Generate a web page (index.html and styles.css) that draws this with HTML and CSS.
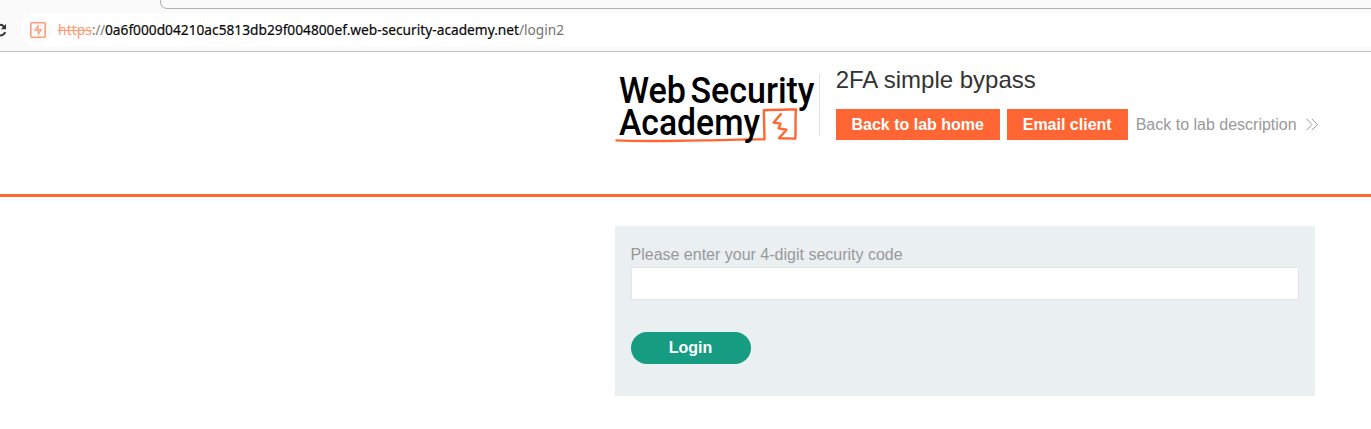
FILE: index.html
```html
<!DOCTYPE html>
<html lang="en">
<head>
<meta charset="utf-8">
<title>2FA simple bypass</title>
<link rel="stylesheet" href="styles.css">
</head>
<body>
<div class="browser">
  <div class="tabs"><div class="tab-edge"></div></div>
  <div class="toolbar">
    <svg class="reload" width="8" height="16" viewBox="0 0 8 16"><path d="M-1 2.9C1.7 2.1 3.3 3.6 4.4 5.6M-1 13.2C2 13.9 4.2 12.6 5.2 10.2" fill="none" stroke="#333" stroke-width="1.9"/><path d="M6 2v5.2H.8z" fill="#333"/></svg>
    <div class="address">
      <span class="site-icon"><svg width="16" height="16" viewBox="0 0 16 16" fill="none" stroke="#ff9c7b"><rect x=".8" y=".8" width="14.4" height="14.4" rx="1" stroke-width="1.6"/><path d="M8.7 3.2L5 8.2H8.4V12.8M8.2 3.8V7.6H11.2L8 12.6" stroke-width="1.2"/></svg></span>
      <svg class="url" width="520" height="24" viewBox="0 0 520 24">
        <text x="0" y="17" textLength="34" lengthAdjust="spacingAndGlyphs" class="scheme">https</text>
        <path d="M0 12.5h34" stroke="#ff9b73"/>
        <text x="34" y="17" textLength="13" lengthAdjust="spacingAndGlyphs" class="muted">://</text>
        <text x="47" y="17" textLength="414" lengthAdjust="spacingAndGlyphs" class="host">0a6f000d04210ac5813db29f004800ef.web-security-academy.net</text>
        <text x="461" y="17" textLength="45" lengthAdjust="spacingAndGlyphs" class="muted">/login2</text>
      </svg>
    </div>
  </div>
</div>
<header class="lab-header">
  <svg class="logo" width="204" height="80" viewBox="0 0 204 80">
    <path d="M1.5 73.4C30 74.8 60 73.6 90 73.4C115 73 130 72.2 149.5 72.4L148.8 43.3C160 42.6 170 42.6 181 42.4C180 52 181 62 180.3 71.6L164 71.3L171.5 62.8L163.7 61.3L165.5 56.6L158.7 55.6L165.7 47.2" fill="none" stroke="#ff6633" stroke-width="2.4" stroke-linecap="round" stroke-linejoin="round"/>
    <text x="4" y="36" textLength="67" lengthAdjust="spacingAndGlyphs">Web</text>
    <text x="75.5" y="36" textLength="124" lengthAdjust="spacingAndGlyphs">Security</text>
    <text x="4" y="68" textLength="141" lengthAdjust="spacingAndGlyphs">Academy</text>
  </svg>
  <div class="title-block">
    <h1>2FA simple bypass</h1>
    <div class="links">
      <a class="button home">Back to lab home</a>
      <a class="button mail">Email client</a>
      <a class="back">Back to lab description
        <svg width="12" height="13" viewBox="0 0 12 13"><path d="M.5 .8L6 6.5L.5 12.2M5.8 .8L11.3 6.5L5.8 12.2" fill="none" stroke="#999"/></svg>
      </a>
    </div>
  </div>
</header>
<main>
  <form class="panel">
    <label for="code">Please enter your 4-digit security code</label>
    <input id="code" type="text">
    <button type="button">Login</button>
  </form>
</main>
</body>
</html>
```
FILE: styles.css
```css
* { box-sizing: border-box; }
body { margin: 0; height: 429px; overflow: hidden; background: #fff; font: 16px/20px "Liberation Sans", Arial, sans-serif; }
.browser { height: 52px; background: #fafafa; border-bottom: 1px solid #c4c4c4; overflow: hidden; }
.tabs { height: 13px; padding-left: 160px; }
.tab-edge { height: 9px; border: solid #b5b5b5; border-width: 0 0 1px 1px; border-bottom-left-radius: 7px; }
.toolbar { display: flex; align-items: center; height: 34px; }
.reload { width: 8px; margin-right: 13px; }
.address { flex: 1; display: flex; align-items: center; height: 34px; background: #fff; border-radius: 17px 0 0 17px; padding-left: 4px; }
.site-icon { display: flex; align-items: center; justify-content: center; width: 26px; height: 26px; margin-right: 7px; border-radius: 50%; background: #fafafa; }
.url { font: 15px "Noto Sans", sans-serif; }
.scheme { fill: #ff9b73; }
.muted { fill: #737373; }
.host { fill: #080808; stroke: #080808; stroke-width: .2px; }
.lab-header { display: flex; height: 145px; padding-left: 614.7px; border-bottom: 3px solid #ff6633; }
.logo { margin-top: 15px; font: 500 37.5px Roboto, sans-serif; fill: #000; overflow: visible; }
.title-block { margin: 22px 0 0 0; height: 62px; padding-left: 16px; border-left: 1px solid #e2e2e2; }
.title-block h1 { margin: -8px 0 15px; font-size: 24px; line-height: 28px; font-weight: 400; color: #333332; }
.links { display: flex; align-items: center; white-space: nowrap; }
.button { height: 31px; line-height: 31px; background: #ff6633; color: #fff; font-weight: 700; text-align: center; margin-right: 7px; }
.home { width: 164px; }
.mail { width: 121px; margin-right: 8px; }
.back { display: flex; align-items: center; gap: 9px; color: #999; }
main { padding: 29px 56px 0 615px; }
.panel { display: flex; flex-direction: column; align-items: flex-start; height: 170px; padding: 19px 16px; background: #eaeff2; }
label { margin-left: -.5px; color: #999; line-height: 20px; }
input { width: 100%; height: 33px; margin: 2px 0 32px; border: 1px solid #e4e4e4; background: #fff; }
button { width: 120px; height: 32px; padding: 0 1px 0 0; border: 0; border-radius: 16px; background: #169c80; color: #fff; font: 700 16px "Liberation Sans", Arial, sans-serif; }
```
